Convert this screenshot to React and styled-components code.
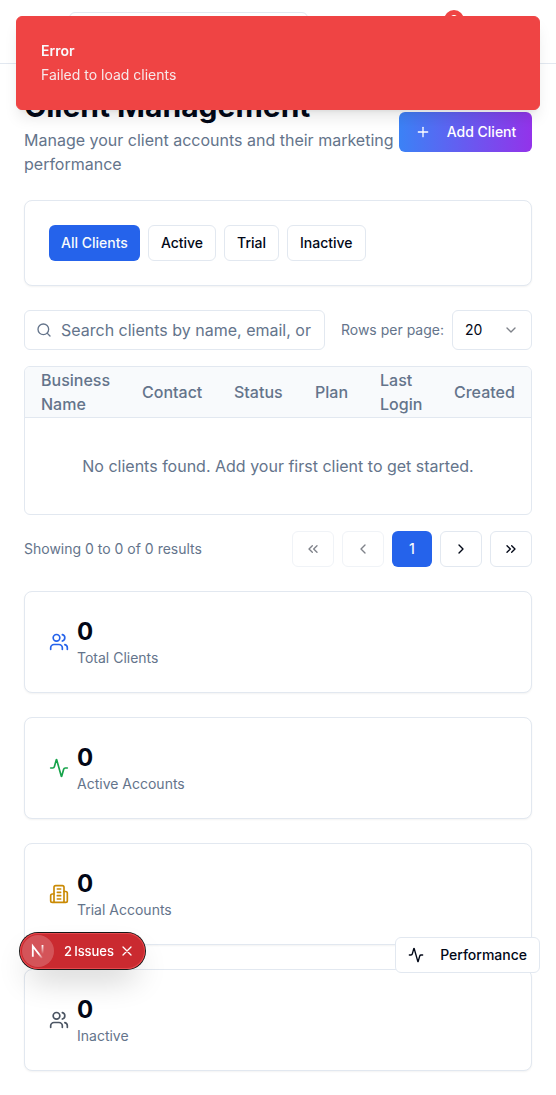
import React from "react";
import styled, { createGlobalStyle, css } from "styled-components";
import {
  Activity, Building, ChevronDown, ChevronLeft, ChevronRight,
  ChevronsLeft, ChevronsRight, Plus, Search, Users,
} from "lucide-react";

const Global = createGlobalStyle`
  *, *::before, *::after { box-sizing: border-box; }
  body { margin: 0; background: #fff; color: #020817; font: 400 16px/24px Inter, "Liberation Sans", sans-serif; }
  button, input { font: inherit; color: inherit; margin: 0; }
  h1, p { margin: 0; }
  svg { display: block; flex: none; }
`;

const line = "1px solid #e2e8f0";

const TopBar = styled.header`
  height: 64px;
  border-bottom: ${line};
  display: flex;
  align-items: flex-start;
  padding: 12px 92px 0 69px;
  justify-content: space-between;
`;
const TopSearch = styled.div`
  width: 239px;
  height: 40px;
  border: ${line};
  border-radius: 6px;
`;
const CountBadge = styled.span`
  width: 20px;
  height: 20px;
  margin-top: -2px;
  border-radius: 50%;
  background: #ef4444;
  color: #fff;
  font-size: 12px;
  font-weight: 600;
  line-height: 20px;
  text-align: center;
`;

const Main = styled.main`
  padding: 24px;
  display: flex;
  flex-direction: column;
  gap: 24px;
`;
const PageHead = styled.div`
  display: flex;
  align-items: center;
  justify-content: space-between;
`;
const Title = styled.h1`
  font-size: 30px;
  line-height: 36px;
  font-weight: 700;
  margin-bottom: 4px;
`;
const Muted = styled.p`
  color: #64748b;
  font-size: ${(p) => (p.$small ? "14px" : "16px")};
  line-height: ${(p) => (p.$small ? "20px" : "24px")};
  white-space: ${(p) => (p.$nowrap ? "nowrap" : "normal")};
`;

const Button = styled.button`
  display: inline-flex;
  align-items: center;
  justify-content: center;
  gap: 8px;
  height: 36px;
  min-width: 40px;
  padding: 0 12px;
  border: ${line};
  border-radius: 6px;
  background: #fff;
  font-size: 14px;
  line-height: 20px;
  font-weight: 500;
  white-space: nowrap;
  flex: none;
  ${(p) => p.$active && css`background: #2563eb; color: #f8fafc; border: 0;`}
  &:disabled { opacity: 0.5; }
`;
const AddButton = styled(Button)`
  height: 40px;
  width: 133px;
  padding: 0 16px;
  gap: 16px;
  border: 0;
  color: #fff;
  background: linear-gradient(to right, #3b82f6, #9333ea);
`;

const Card = styled.section`
  border: ${line};
  border-radius: 8px;
  background: #fff;
  padding: 24px;
  display: flex;
  align-items: center;
  gap: 8px;
  box-shadow: 0 1px 2px rgba(0, 0, 0, 0.05);
`;

const ListBlock = styled.div`
  display: flex;
  flex-direction: column;
  gap: 16px;
`;
const Controls = styled.div`
  display: flex;
  align-items: center;
  gap: 16px;
`;
const SearchBox = styled.label`
  flex: 1;
  min-width: 0;
  height: 40px;
  display: flex;
  align-items: center;
  gap: 9px;
  padding: 0 12px 0 11px;
  border: ${line};
  border-radius: 6px;
  color: #64748b;
  input {
    flex: 1;
    min-width: 0;
    border: 0;
    padding: 0;
    outline: 0;
    background: transparent;
  }
  input::placeholder { color: #64748b; opacity: 1; }
`;
const RowsPicker = styled.div`
  display: flex;
  align-items: center;
  gap: 8px;
`;
const Select = styled.div`
  width: 80px;
  height: 40px;
  padding: 0 12px;
  border: ${line};
  border-radius: 6px;
  display: flex;
  align-items: center;
  justify-content: space-between;
  font-size: 14px;
  svg { opacity: 0.5; }
`;

const TableFrame = styled.div`
  border: ${line};
  border-radius: 6px;
  overflow: hidden;
`;
const Table = styled.table`
  width: 100%;
  table-layout: fixed;
  border-spacing: 0;
  th {
    padding: 1px 16px;
    text-align: left;
    font-weight: 500;
    color: #64748b;
    background: #f8fafc;
    border-bottom: ${line};
  }
  td {
    padding: 36px 16px;
    text-align: center;
    color: #64748b;
  }
`;

const Footer = styled.div`
  display: flex;
  align-items: center;
  justify-content: space-between;
`;
const Group = styled.div`
  display: flex;
  gap: 8px;
`;

const StatValue = styled.p`
  font-size: 24px;
  line-height: 32px;
  font-weight: 700;
`;

const Toast = styled.div`
  position: fixed;
  top: 16px;
  left: 16px;
  right: 16px;
  padding: 24px;
  border: 1px solid #ef4444;
  border-radius: 6px;
  background: #ef4444;
  color: #f8fafc;
  display: grid;
  gap: 4px;
  font-size: 14px;
  line-height: 20px;
  box-shadow: 0 10px 15px -3px rgba(0, 0, 0, 0.1), 0 4px 6px -4px rgba(0, 0, 0, 0.1);
`;
const ToastTitle = styled.div`font-weight: 600;`;
const ToastText = styled.div`opacity: 0.9;`;

const PerformanceButton = styled(Button)`
  position: fixed;
  right: 16px;
  bottom: 122px;
  gap: 16px;
`;

const IssuesPill = styled.div`
  position: fixed;
  left: 20px;
  top: 933px;
  width: 125px;
  height: 36px;
  padding: 2px;
  display: flex;
  align-items: center;
  border-radius: 18px;
  background: #ca2a30;
  color: #fff;
  font-size: 13px;
  font-weight: 500;
  box-shadow: 0 0 0 1px #171717, inset 0 0 0 1px #e5484d, 0 16px 32px -8px rgba(0, 0, 0, 0.24);
`;
const LogoDisc = styled.div`
  width: 32px;
  height: 32px;
  border-radius: 50%;
  background: rgba(255, 255, 255, 0.2);
  display: grid;
  place-items: center;
`;
const IssuesText = styled.span`
  margin-left: 10px;
  width: 50px;
  white-space: nowrap;
  word-spacing: -1.2px;
  letter-spacing: -0.05px;
`;
const CloseMark = styled.svg`margin-left: 8px;`;

const columns = [
  ["Business Name", 101], ["Contact", 92], ["Status", 81],
  ["Plan", 65], ["Last Login", 74], ["Created", 93],
];
const stats = [
  ["Total Clients", Users, "#2563eb"],
  ["Active Accounts", Activity, "#16a34a"],
  ["Trial Accounts", Building, "#ca8a04"],
  ["Inactive", Users, "#4b5563"],
];

function BuildingIcon() {
  return (
    <svg width="20" height="20" viewBox="0 0 24 24" fill="none" stroke="#ca8a04" strokeWidth="2" strokeLinecap="round" strokeLinejoin="round">
      <path d="M6 22V4a2 2 0 0 1 2-2h8a2 2 0 0 1 2 2v18Z" />
      <path d="M6 12H4a2 2 0 0 0-2 2v6a2 2 0 0 0 2 2h2" />
      <path d="M18 9h2a2 2 0 0 1 2 2v9a2 2 0 0 1-2 2h-2" />
      <path d="M10 6h4M10 10h4M10 14h4M10 18h4" />
    </svg>
  );
}

function NextMark() {
  return (
    <svg width="16" height="16" viewBox="0 0 16 16" fill="none">
      <defs>
        <linearGradient id="diag" x1="9.5" y1="10" x2="13.5" y2="15" gradientUnits="userSpaceOnUse">
          <stop stopColor="#fff" />
          <stop offset="1" stopColor="#fff" stopOpacity="0" />
        </linearGradient>
        <linearGradient id="stem" x1="12" y1="2" x2="12" y2="11" gradientUnits="userSpaceOnUse">
          <stop stopColor="#fff" />
          <stop offset="1" stopColor="#fff" stopOpacity="0" />
        </linearGradient>
      </defs>
      <path d="M2.800 13.800V3.200L12 15" stroke="url(#diag)" strokeWidth="1.8" />
      <path d="M12.500 2v9" stroke="url(#stem)" strokeWidth="1.8" />
    </svg>
  );
}

export default function App() {
  return (
    <>
      <Global />
      <TopBar>
        <TopSearch />
        <CountBadge>3</CountBadge>
      </TopBar>
      <Main>
        <PageHead>
          <div>
            <Title>Client Management</Title>
            <Muted>Manage your client accounts and their marketing performance</Muted>
          </div>
          <AddButton><Plus size={16} />Add Client</AddButton>
        </PageHead>
        <Card>
          <Button $active>All Clients</Button>
          <Button>Active</Button>
          <Button>Trial</Button>
          <Button>Inactive</Button>
        </Card>
        <ListBlock>
          <Controls>
            <SearchBox>
              <Search size={16} />
              <input placeholder="Search clients by name, email, or" />
            </SearchBox>
            <RowsPicker>
              <Muted $small $nowrap>Rows per page:</Muted>
              <Select>20<ChevronDown size={16} /></Select>
            </RowsPicker>
          </Controls>
          <TableFrame>
            <Table>
              <colgroup>
                {columns.map(([name, width]) => <col key={name} width={width} />)}
              </colgroup>
              <thead>
                <tr>{columns.map(([name]) => <th key={name}>{name}</th>)}</tr>
              </thead>
              <tbody>
                <tr><td colSpan={6}>No clients found. Add your first client to get started.</td></tr>
              </tbody>
            </Table>
          </TableFrame>
          <Footer>
            <Muted $small>Showing 0 to 0 of 0 results</Muted>
            <Group>
              <Button disabled><ChevronsLeft size={16} /></Button>
              <Button disabled><ChevronLeft size={16} /></Button>
              <Button $active>1</Button>
              <Button><ChevronRight size={16} /></Button>
              <Button><ChevronsRight size={16} /></Button>
            </Group>
          </Footer>
        </ListBlock>
        {stats.map(([label, Icon, color]) => (
          <Card key={label}>
            {Icon === Building ? <BuildingIcon /> : <Icon size={20} color={color} />}
            <div>
              <StatValue>0</StatValue>
              <Muted $small>{label}</Muted>
            </div>
          </Card>
        ))}
      </Main>
      <PerformanceButton><Activity size={16} />Performance</PerformanceButton>
      <IssuesPill>
        <LogoDisc><NextMark /></LogoDisc>
        <IssuesText>2 Issues</IssuesText>
        <CloseMark width="10" height="10" viewBox="0 0 10 10" stroke="#fff" strokeWidth="1.3" strokeLinecap="round">
          <path d="M1 1l8 8M9 1L1 9" />
        </CloseMark>
      </IssuesPill>
      <Toast>
        <ToastTitle>Error</ToastTitle>
        <ToastText>Failed to load clients</ToastText>
      </Toast>
    </>
  );
}
